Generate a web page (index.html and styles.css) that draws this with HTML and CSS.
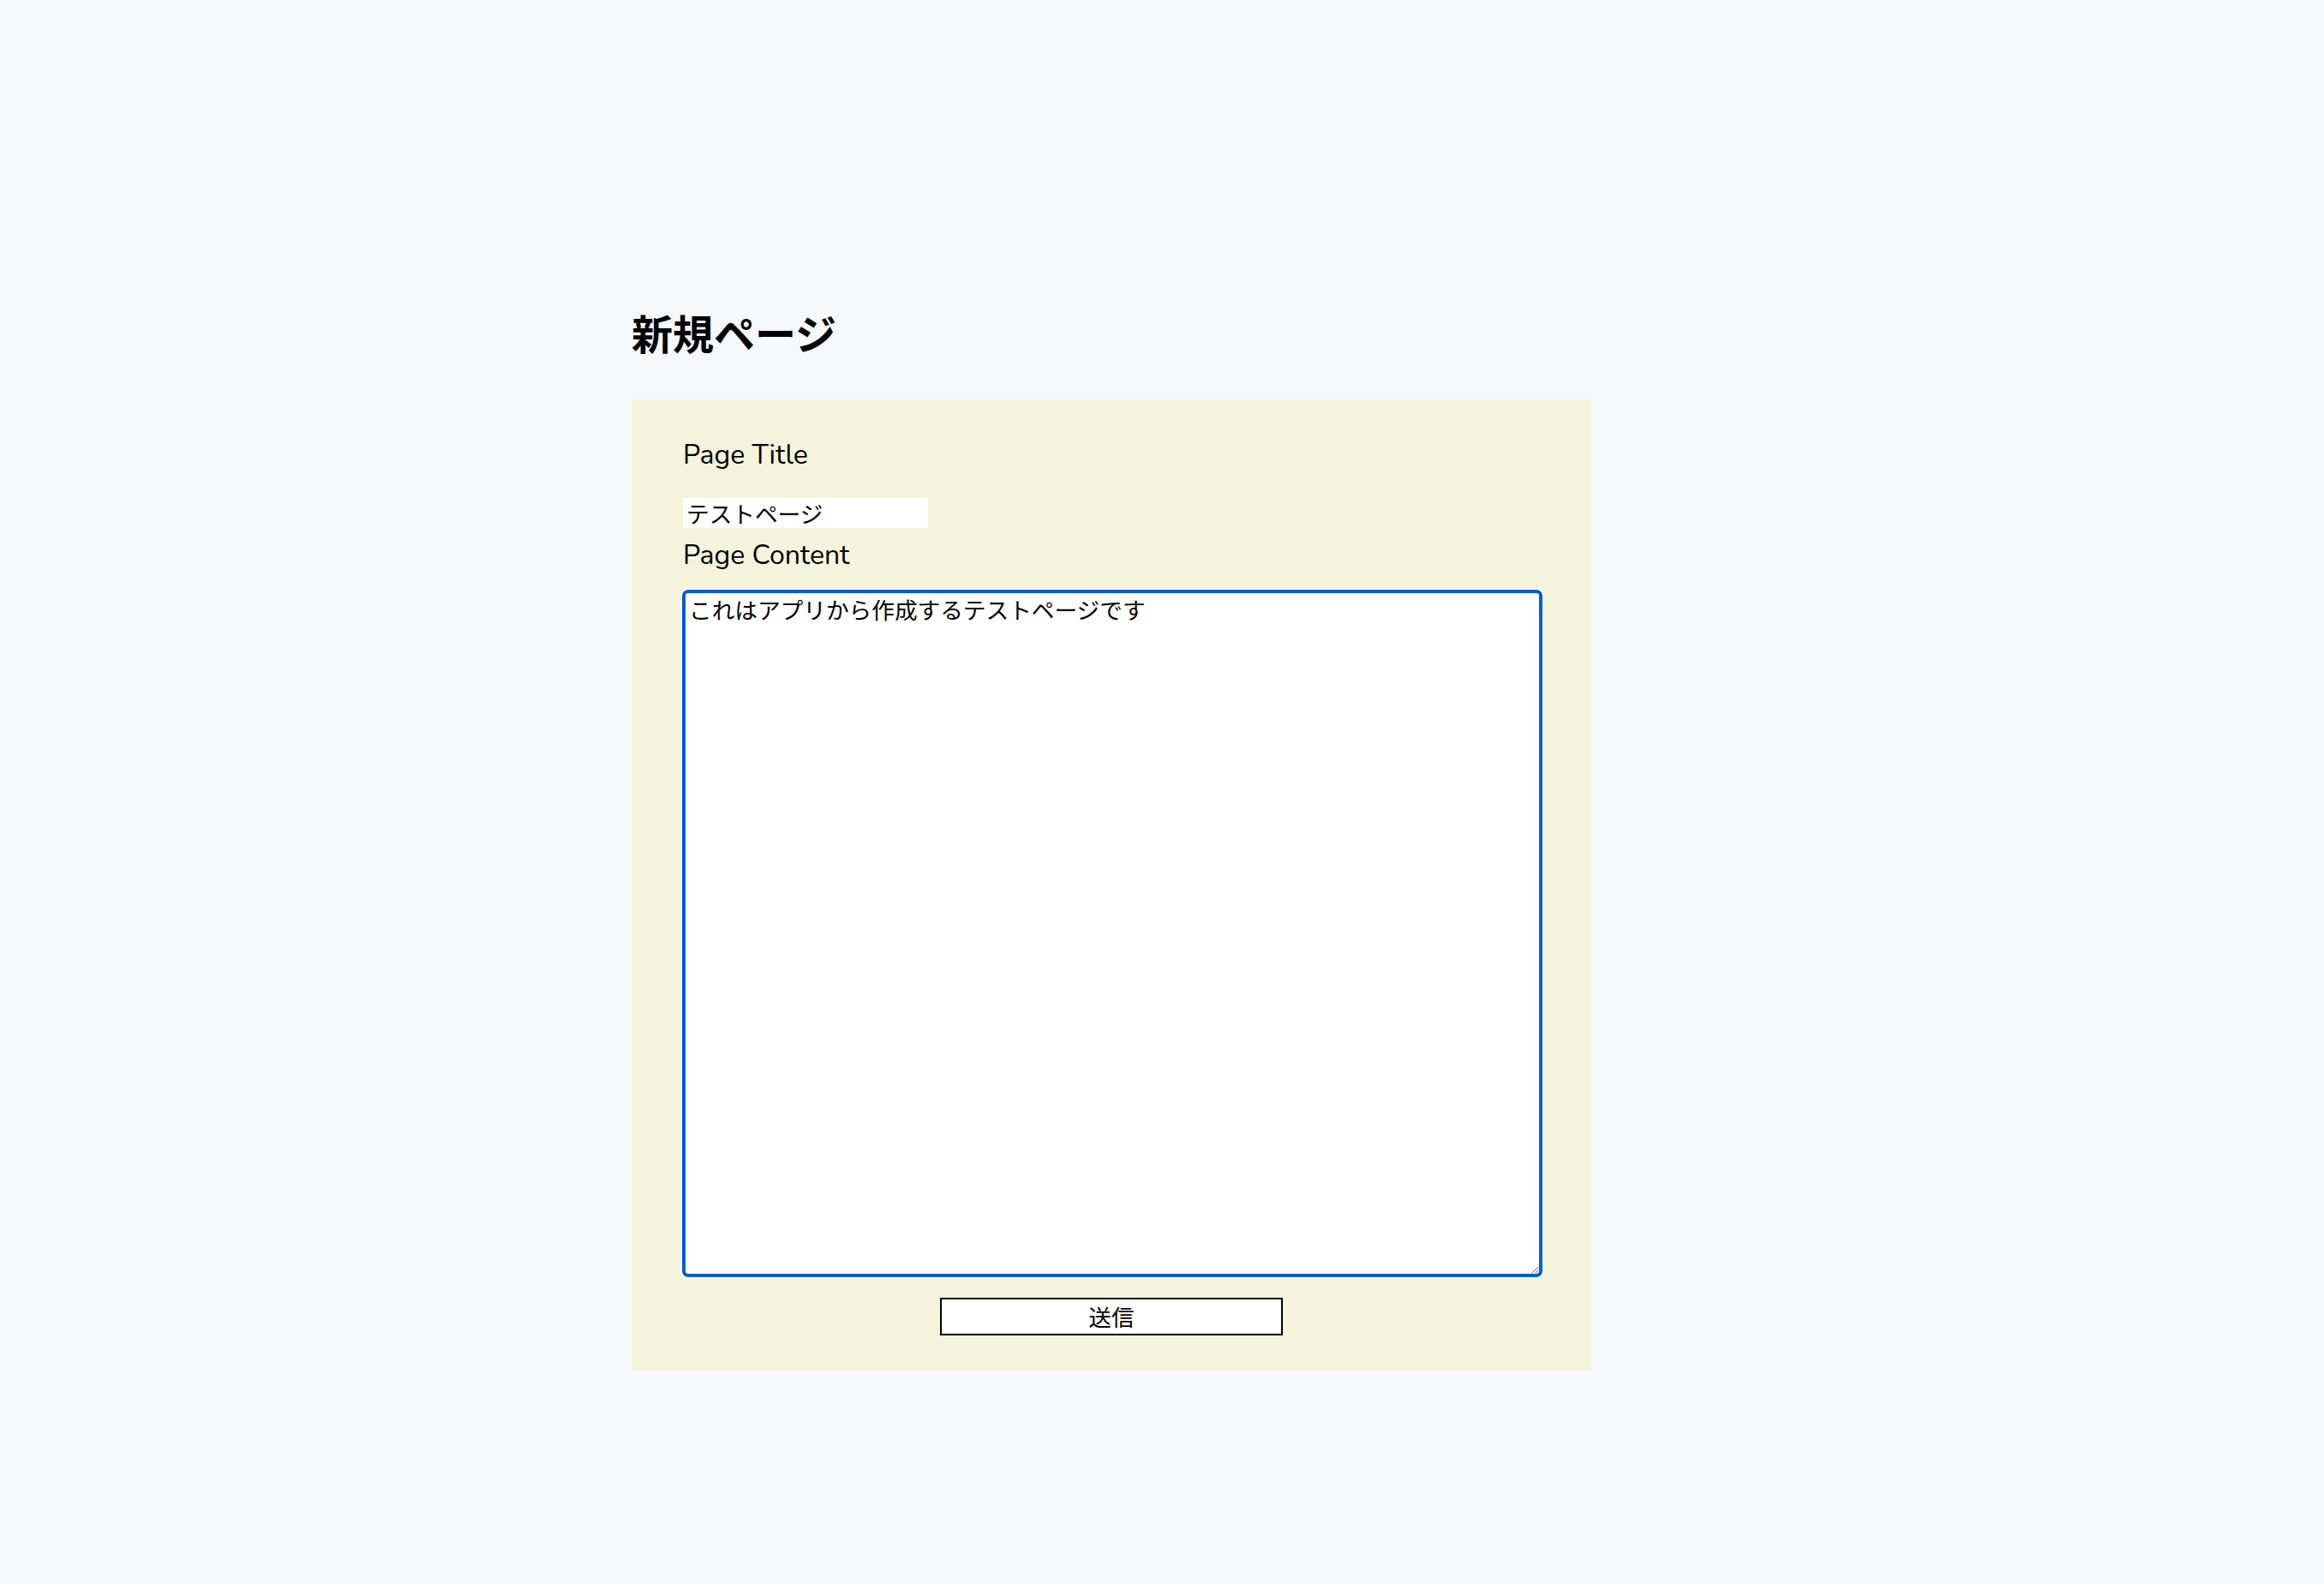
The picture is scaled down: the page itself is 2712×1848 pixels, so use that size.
FILE: index.html
```html
<!DOCTYPE html>
<html lang="ja">
<head>
<meta charset="utf-8">
<title>新規ページ</title>
<link rel="stylesheet" href="styles.css">
</head>
<body>
<main class="page">
  <h2 class="heading">新規ページ</h2>
  <form class="panel">
    <label class="label label-title" for="title">Page Title</label>
    <input class="title-input" id="title" type="text" value="テストページ">
    <label class="label label-content" for="content">Page Content</label>
    <textarea class="content-input" id="content">これはアプリから作成するテストページです</textarea>
    <button class="submit" type="button">送信</button>
  </form>
</main>
<script src="script.js"></script>
</body>
</html>
```

FILE: styles.css
```css
html, body {
  margin: 0;
  padding: 0;
  background: #f5f9fc;
}

body {
  font-family: "Noto Sans", "Noto Sans CJK JP", sans-serif;
  color: #000;
}

.page {
  padding-top: 352px;
  margin-left: 737px;
  width: 1120px;
}

.heading {
  margin: 0 0 44px 0;
  font-family: "Noto Sans CJK JP", sans-serif;
  font-size: 48px;
  font-weight: 700;
  line-height: 70px;
}

.panel {
  display: flex;
  flex-direction: column;
  align-items: flex-start;
  box-sizing: border-box;
  width: 1120px;
  padding: 43px 60px 41px 60px;
  background: #f4f4dc;
}

.label {
  display: block;
  font-family: "Nunito", "Lato", "Noto Sans", sans-serif;
  font-size: 32px;
  line-height: 44px;
}

.label-title {
  margin-bottom: 28px;
}

.label-content {
  margin-top: 10px;
  margin-bottom: 18px;
}

.title-input {
  box-sizing: border-box;
  width: 286px;
  height: 35px;
  margin: 0;
  padding: 0 4px;
  border: none;
  background: #fff;
  font-family: "Noto Sans CJK JP", sans-serif;
  font-size: 26.67px;
  color: #000;
  outline: none;
}

.content-input {
  box-sizing: border-box;
  width: 1004px;
  height: 802px;
  margin: 0 0 0 -1px;
  padding: 1px 4px;
  border: 4px solid #005fcc;
  border-radius: 7px;
  box-shadow: 0 0 0 2px #ffffff;
  background: #fff;
  font-family: "Noto Sans CJK JP", sans-serif;
  font-size: 26.67px;
  line-height: 36px;
  color: #000;
  caret-color: #000;
  outline: none;
  resize: both;
}

.content-input:focus {
  outline: none;
}

.submit {
  align-self: center;
  box-sizing: border-box;
  width: 400px;
  height: 44px;
  margin-top: 24px;
  padding: 0;
  border: 2px solid #000;
  border-radius: 0;
  background: #fff;
  font-family: "Noto Sans CJK JP", sans-serif;
  font-size: 26.67px;
  line-height: 38px;
  color: #000;
}
```

FILE: script.js
```js
window.addEventListener('load', function () {
  var ta = document.getElementById('content');
  ta.focus();
  var n = ta.value.length;
  ta.setSelectionRange(n, n);
});
```
